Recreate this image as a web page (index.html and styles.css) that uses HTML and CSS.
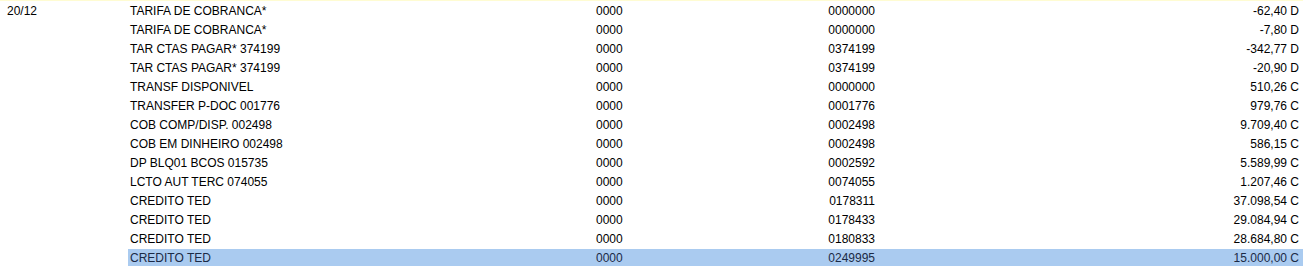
FILE: index.html
```html
<!DOCTYPE html>
<html lang="pt-BR">
<head>
<meta charset="utf-8">
<title>Extrato</title>
<link rel="stylesheet" href="styles.css">
</head>
<body>
<div class="sheet">
  <div class="topline"></div>
  <table class="extrato">
    <colgroup>
      <col class="c-date">
      <col class="c-desc">
      <col class="c-ag">
      <col class="c-doc">
      <col class="c-val">
    </colgroup>
    <tbody>
      <tr><td class="date" rowspan="14">20/12</td><td class="desc">TARIFA DE COBRANCA*</td><td class="ag">0000</td><td class="doc">0000000</td><td class="val">-62,40 D</td></tr>
      <tr><td class="desc">TARIFA DE COBRANCA*</td><td class="ag">0000</td><td class="doc">0000000</td><td class="val">-7,80 D</td></tr>
      <tr><td class="desc">TAR CTAS PAGAR* 374199</td><td class="ag">0000</td><td class="doc">0374199</td><td class="val">-342,77 D</td></tr>
      <tr><td class="desc">TAR CTAS PAGAR* 374199</td><td class="ag">0000</td><td class="doc">0374199</td><td class="val">-20,90 D</td></tr>
      <tr><td class="desc">TRANSF DISPONIVEL</td><td class="ag">0000</td><td class="doc">0000000</td><td class="val">510,26 C</td></tr>
      <tr><td class="desc">TRANSFER P-DOC 001776</td><td class="ag">0000</td><td class="doc">0001776</td><td class="val">979,76 C</td></tr>
      <tr><td class="desc">COB COMP/DISP. 002498</td><td class="ag">0000</td><td class="doc">0002498</td><td class="val">9.709,40 C</td></tr>
      <tr><td class="desc">COB EM DINHEIRO 002498</td><td class="ag">0000</td><td class="doc">0002498</td><td class="val">586,15 C</td></tr>
      <tr><td class="desc">DP BLQ01 BCOS 015735</td><td class="ag">0000</td><td class="doc">0002592</td><td class="val">5.589,99 C</td></tr>
      <tr><td class="desc">LCTO AUT TERC 074055</td><td class="ag">0000</td><td class="doc">0074055</td><td class="val">1.207,46 C</td></tr>
      <tr><td class="desc">CREDITO TED</td><td class="ag">0000</td><td class="doc">0178311</td><td class="val">37.098,54 C</td></tr>
      <tr><td class="desc">CREDITO TED</td><td class="ag">0000</td><td class="doc">0178433</td><td class="val">29.084,94 C</td></tr>
      <tr><td class="desc">CREDITO TED</td><td class="ag">0000</td><td class="doc">0180833</td><td class="val">28.684,80 C</td></tr>
      <tr class="selected"><td class="desc">CREDITO TED</td><td class="ag">0000</td><td class="doc">0249995</td><td class="val">15.000,00 C</td></tr>
    </tbody>
  </table>
</div>
</body>
</html>
```

FILE: styles.css
```css
html, body {
  margin: 0;
  padding: 0;
  background: #ffffff;
}

.sheet {
  width: 1303px;
  font-family: "Liberation Sans", Arial, sans-serif;
  font-size: 12px;
  color: #000000;
}

.topline {
  height: 1px;
  background: #fffcd2;
}

.extrato {
  width: 1303px;
  margin-top: -1px;
  border-collapse: separate;
  border-spacing: 0 2px;
  table-layout: fixed;
}

.c-date { width: 128px; }
.c-desc { width: 466px; }
.c-ag   { width: 106px; }
.c-doc  { width: 178px; }
.c-val  { width: 425px; }

.extrato td {
  height: 17px;
  padding: 0;
  line-height: 14px;
  white-space: nowrap;
  vertical-align: middle;
}

.extrato td.date {
  padding-left: 7px;
  vertical-align: top;
  padding-top: 2px;
  height: auto;
}

.extrato td.desc { padding-left: 2px; }
.extrato td.ag   { padding-left: 2px; }
.extrato td.doc  { text-align: right; padding-right: 3px; }
.extrato td.val  { text-align: right; padding-right: 4px; }

.selected td {
  background: #aacbf0;
  color: #1b2a46;
}
```
